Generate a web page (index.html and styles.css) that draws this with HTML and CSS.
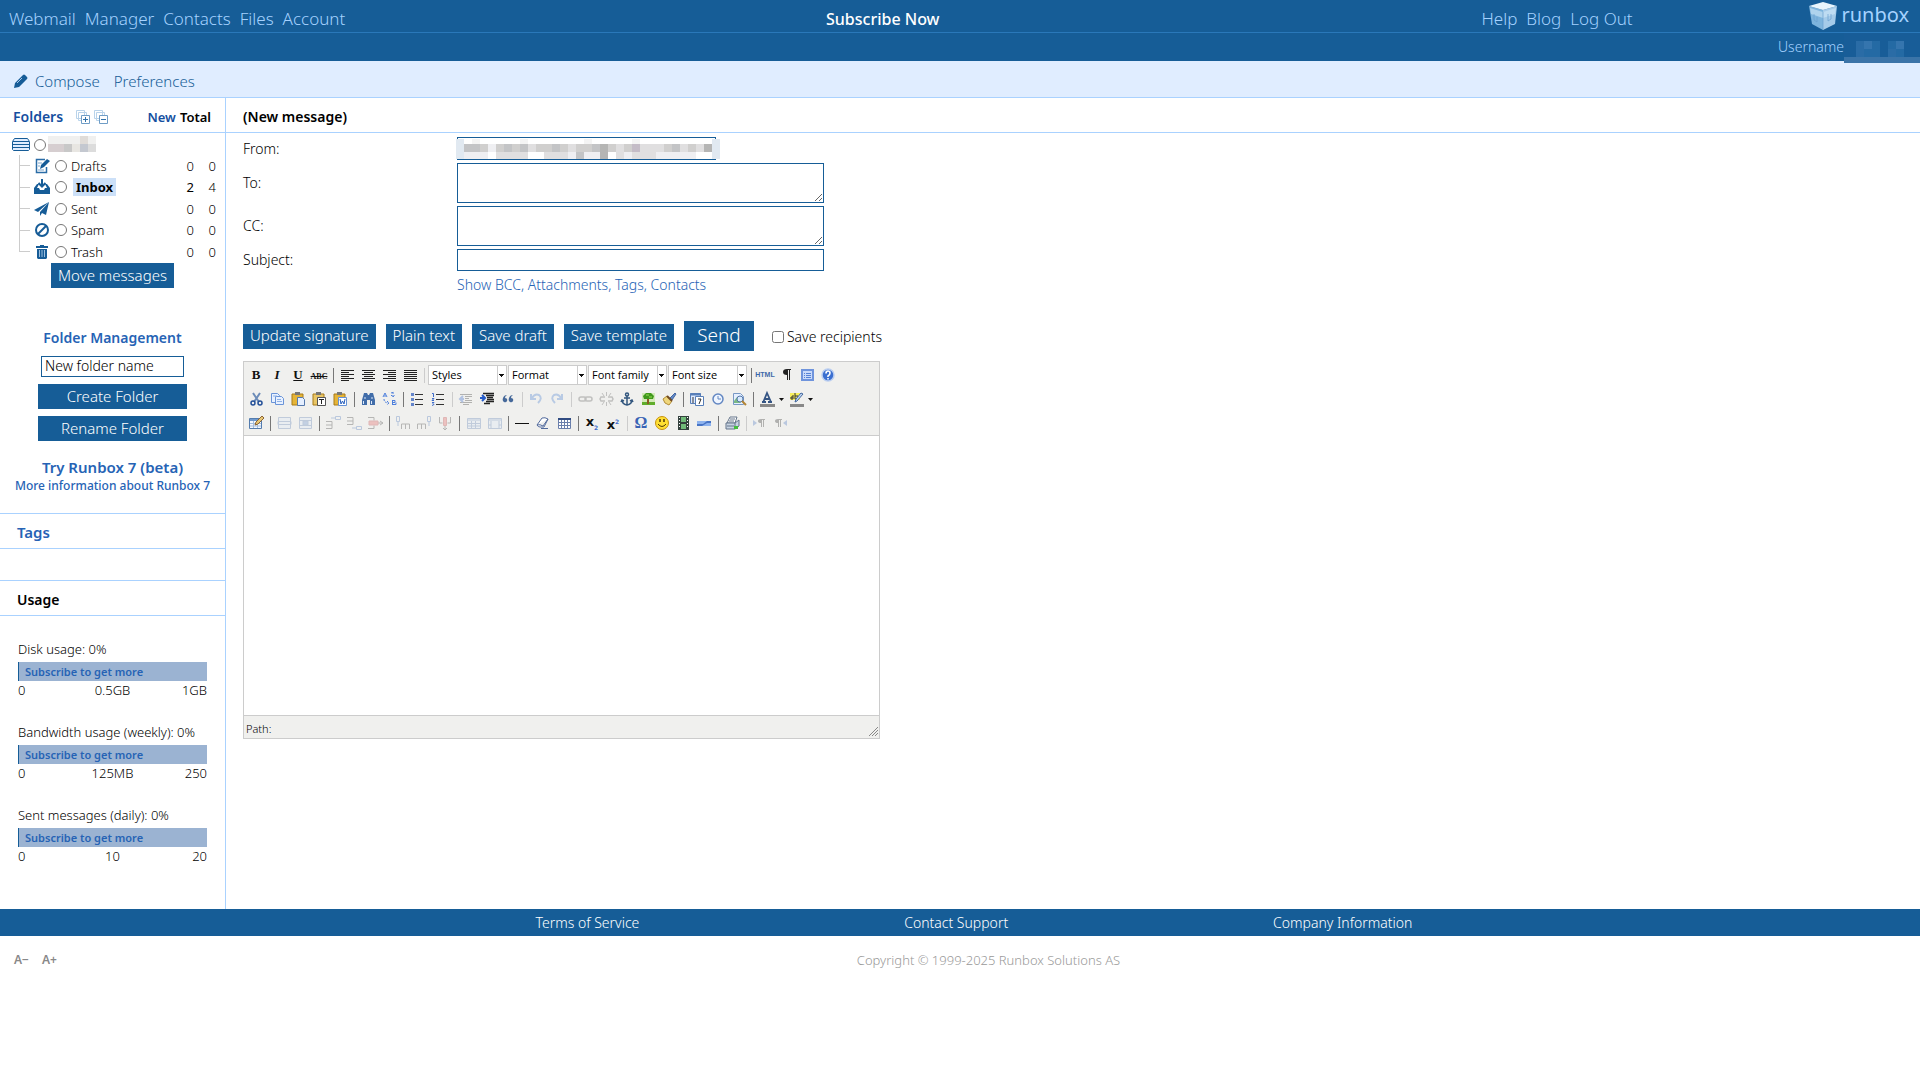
FILE: index.html
```html
<!doctype html>
<html lang="en">

<head>
    <meta charset="UTF-8" />
    <meta name="viewport" content="width=device-width, initial-scale=1.0" />
    <title>Runbox - Compose</title>
    <link rel="stylesheet" href="styles.css">
</head>

<body>
    <header class="header">
        <div class="topbar">
            <nav class="nav">
                <a href="#">Webmail</a>
                <a href="#">Manager</a>
                <a href="#">Contacts</a>
                <a href="#">Files</a>
                <a href="#">Account</a>
            </nav>
            <a class="subscribe" href="#">Subscribe Now</a>
            <nav class="nav nav-right">
                <a href="#">Help</a>
                <a href="#">Blog</a>
                <a href="#">Log Out</a>
            </nav>
            <a class="logo" href="#">
                <svg width="28" height="28" viewBox="0 0 28 28">
                    <path d="M0 4 14 8v20L3 22z" fill="#7db4dd" />
                    <path d="M28 4 14 8v20l12-6z" fill="#a5cbe9" />
                    <path d="M0 4 14 0l14 4-14 4z" fill="#e8f5fd" />
                    <path d="M1 6l13 4 13-4-1 6-12 4-12-4z" fill="#cfe8f8" opacity=".6" />
                    <path d="M5 12v6l3 2v-5M19 12v7l3-2v-5M14 10v17" fill="none" stroke="#6b9fce" opacity=".7" />
                </svg>
                <span>runbox</span>
            </a>
        </div>
        <div class="userbar">
            <span>Username</span>
            <svg class="user-name" width="76" height="30" viewBox="0 0 76 30">
                <path fill="#185d98" d="M0 0h76v30H0z" />
                <path fill="#2a6ca6" d="M12 8h8v16h-8zM44 16h8v8h-8z" />
                <path fill="#3575ae" d="M20 8h8v8h-8zM52 8h8v8h-8z" />
                <path fill="#246aa4" d="M20 16h16v8H20zM28 8h8v8h-8zM44 8h8v8h-8zM52 16h8v8h-8z" />
                <path fill="#3b74a8" d="M0 24h76v6H0z" />
            </svg>
        </div>
    </header>

    <div class="actions">
        <a href="#">
            <svg width="14" height="14" viewBox="0 0 14 14" fill="#165c97"><path d="M0 14l1-5 7-7 4 4-7 7zM9 1q1-1 2 0l2 2q1 1 0 2l-1 1-4-4z" /><path d="M3 9l5-5" stroke="#a8c9e8" /></svg>
            Compose
        </a>
        <a href="#">Preferences</a>
    </div>

    <div class="content">
        <aside class="sidebar">
            <div class="panel-head folders-head">
                <a href="#">Folders</a>
                <svg width="14" height="14" viewBox="0 0 14 14" fill="#fff" stroke="#b9d3ea"><path d="M.5.5h8v8h-8zM2.500 2.500h8v8h-8z" /><path d="M5.500 5.500h8v8h-8z" stroke="#6f9dc6" /><path d="M7 9.500h5M9.500 7v5" stroke="#3272ab" /></svg>
                <svg width="14" height="14" viewBox="0 0 14 14" fill="#fff" stroke="#b9d3ea"><path d="M.5.5h8v8h-8zM2.500 2.500h8v8h-8z" /><path d="M5.500 5.500h8v8h-8z" stroke="#6f9dc6" /><path d="M7 9.500h5" stroke="#3272ab" /></svg>
                <a class="new" href="#">New</a>
                <span class="total">Total</span>
            </div>

            <div class="folders">
                <div class="folder-root">
                    <svg width="18" height="13" viewBox="0 0 18 13" fill="#e0edff" stroke="#165c97"><path d="M2.500.5h13l2 3v8l-1 1h-15l-1-1v-8z" /><path d="M1 3.500h16M1 6.500h16M1 9.500h16" /></svg>
                    <input type="radio" name="folder" aria-label="Root folder">
                    <svg width="48" height="16" viewBox="0 0 48 16">
                        <path fill="#f0f0ef" d="M0 0h48v8H0z" />
                        <path fill="#e0dcd8" d="M32 0h8v8h-8z" />
                        <path fill="#d6ced0" d="M0 8h8v8H0zM8 8h8v8H8z" />
                        <path fill="#c8c8c8" d="M16 8h8v8h-8z" />
                        <path fill="#e8e6e2" d="M24 8h8v8h-8z" />
                        <path fill="#c4c8d0" d="M32 8h8v8h-8z" />
                        <path fill="#dcdcdc" d="M40 8h8v8h-8z" />
                    </svg>
                </div>
                <ul class="tree">
                    <li>
                        <svg width="16" height="16" viewBox="0 0 16 16"><path d="M11 1.500H2.500v13h10V9" fill="none" stroke="#2a6ca6" stroke-width="1.500" /><path d="M4 5h4M4 8h2M4 12h6" stroke="#7ba5cc" /><path d="M6 11l1-4 6-6 3 2-6 6z" fill="#165c97" /></svg>
                        <input type="radio" name="folder" id="drafts">
                        <label for="drafts">Drafts</label>
                        <span>0</span><span>0</span>
                    </li>
                    <li class="active">
                        <svg width="16" height="16" viewBox="0 0 16 16"><path d="M0 9l3-4h2L3 9h2l1 2h4l1-2h2l-2-4h2l3 4v6H0z" fill="#165c97" /><path d="M8 0v7M4.500 4 8 7.500 11.500 4" fill="none" stroke="#165c97" stroke-width="2" /></svg>
                        <input type="radio" name="folder" id="inbox">
                        <label for="inbox">Inbox</label>
                        <span>2</span><span>4</span>
                    </li>
                    <li>
                        <svg width="16" height="16" viewBox="0 0 16 16"><path d="M15 1L0 9l4 2zM15 1L6 11v4l2-3 4 2z" fill="#165c97" /></svg>
                        <input type="radio" name="folder" id="sent">
                        <label for="sent">Sent</label>
                        <span>0</span><span>0</span>
                    </li>
                    <li>
                        <svg width="16" height="16" viewBox="0 0 16 16"><circle cx="8" cy="8" r="6" fill="none" stroke="#165c97" stroke-width="2" /><path d="M4 12l8-8" stroke="#165c97" stroke-width="2" /></svg>
                        <input type="radio" name="folder" id="spam">
                        <label for="spam">Spam</label>
                        <span>0</span><span>0</span>
                    </li>
                    <li>
                        <svg width="16" height="16" viewBox="0 0 16 16"><path d="M2 2h4V1h4v1h4v2H2zM3 5h10v9l-1 1H4l-1-1z" fill="#165c97" /><path d="M5.500 6v7M8 6v7M10.500 6v7" stroke="#9dbfdf" /></svg>
                        <input type="radio" name="folder" id="trash">
                        <label for="trash">Trash</label>
                        <span>0</span><span>0</span>
                    </li>
                </ul>
                <button class="btn" type="button">Move messages</button>
            </div>

            <div class="manage">
                <a class="manage-title" href="#">Folder Management</a>
                <input type="text" value="New folder name" aria-label="New folder name">
                <button class="btn" type="button">Create Folder</button>
                <button class="btn" type="button">Rename Folder</button>
                <a class="beta" href="#">Try Runbox 7 (beta)</a>
                <a class="beta-info" href="#">More information about Runbox 7</a>
            </div>

            <div class="panel-head tags-head"><a href="#">Tags</a></div>
            <div class="tags"></div>
            <div class="panel-head">Usage</div>

            <div class="usage">
                <div class="meter">
                    <div>Disk usage: 0%</div>
                    <a href="#">Subscribe to get more</a>
                    <div class="scale"><span>0</span><span>0.5GB</span><span>1GB</span></div>
                </div>
                <div class="meter">
                    <div>Bandwidth usage (weekly): 0%</div>
                    <a href="#">Subscribe to get more</a>
                    <div class="scale"><span>0</span><span>125MB</span><span>250</span></div>
                </div>
                <div class="meter">
                    <div>Sent messages (daily): 0%</div>
                    <a href="#">Subscribe to get more</a>
                    <div class="scale"><span>0</span><span>10</span><span>20</span></div>
                </div>
            </div>
        </aside>

        <main class="main">
            <h1 class="message-head">(New message)</h1>
            <form class="compose">
                <div class="fields">
                    <label for="from">From:</label>
                    <div class="from">
                        <select id="from"></select>
                        <svg class="from-name" width="264" height="20" viewBox="0 0 264 20">
                            <path fill="#fff" d="M8 0h248v20H8z" />
                            <path fill="#e1e9f1" d="M0 0h8v20H0zM256 0h8v20h-8z" />
                            <path fill="#f4f4f4" d="M16 0h8v5h-8zM64 0h8v5h-8zM128 0h8v5h-8zM176 0h8v5h-8z" />
                            <path fill="#d0cfce" d="M24 5h8v8h-8zM40 5h8v8h-8zM56 5h8v8h-8zM80 5h8v8h-8zM88 5h8v8h-8zM104 5h8v8h-8zM120 5h16v8h-16zM152 5h8v8h-8zM168 5h8v8h-8zM208 5h8v8h-8zM232 5h8v8h-8z" />
                            <path fill="#c3c4c6" d="M8 5h16v8H8zM48 5h8v8h-8zM64 5h8v8h-8zM96 5h8v8h-8zM136 5h8v8h-8zM216 5h8v8h-8zM120 13h8v7h-8z" />
                            <path fill="#b5b5b4" d="M144 5h8v15h-8zM248 5h8v8h-8z" />
                            <path fill="#c4bcc7" d="M176 5h8v8h-8z" />
                            <path fill="#e0dfe0" d="M72 5h8v8h-8zM112 5h8v8h-8zM160 5h8v8h-8zM184 5h24v8h-24zM224 5h8v8h-8zM240 5h8v8h-8zM40 13h32v7H40zM88 13h24v7H88zM160 13h8v7h-8zM176 13h24v7h-24z" />
                            <path fill="#efeff2" d="M32 5h8v8h-8zM8 13h24v7H8zM112 13h8v7h-8zM128 13h16v7h-16zM168 13h8v7h-8zM200 13h40v7h-40z" />
                        </svg>
                    </div>
                    <label for="to">To:</label>
                    <textarea id="to"></textarea>
                    <label for="cc">CC:</label>
                    <textarea id="cc"></textarea>
                    <label for="subject">Subject:</label>
                    <input id="subject" type="text">
                    <a class="more" href="#">Show BCC, Attachments, Tags, Contacts</a>
                </div>

                <div class="buttons">
                    <button class="btn" type="button">Update signature</button>
                    <button class="btn" type="button">Plain text</button>
                    <button class="btn" type="button">Save draft</button>
                    <button class="btn" type="button">Save template</button>
                    <button class="btn send" type="button">Send</button>
                    <label class="save-recipients"><input type="checkbox">Save recipients</label>
                </div>

                <div class="editor">
                    <div class="toolbar">
                        <div class="tools">
                            <button type="button" aria-label="Bold"><b>B</b></button>
                            <button type="button" aria-label="Italic"><i>I</i></button>
                            <button type="button" aria-label="Underline"><u>U</u></button>
                            <button type="button" aria-label="Strikethrough"><s>ABC</s></button>
                            <hr>
                            <button type="button" aria-label="Align left"><svg viewBox="0 0 20 20" stroke="#222"><path d="M4 5.500h13M4 7.500h8M4 9.500h13M4 11.500h8M4 13.500h13M4 15.500h8" /></svg></button>
                            <button type="button" aria-label="Align center"><svg viewBox="0 0 20 20" stroke="#222"><path d="M4 5.500h13M6 7.500h9M4 9.500h13M6 11.500h9M4 13.500h13M6 15.500h9" /></svg></button>
                            <button type="button" aria-label="Align right"><svg viewBox="0 0 20 20" stroke="#222"><path d="M4 5.500h13M9 7.500h8M4 9.500h13M9 11.500h8M4 13.500h13M9 15.500h8" /></svg></button>
                            <button type="button" aria-label="Justify"><svg viewBox="0 0 20 20" stroke="#222"><path d="M4 5.500h13M4 7.500h13M4 9.500h13M4 11.500h13M4 13.500h13M4 15.500h13" /></svg></button>
                            <hr class="light">
                            <select aria-label="Styles"><option>Styles</option></select>
                            <select aria-label="Format"><option>Format</option></select>
                            <select aria-label="Font family"><option>Font family</option></select>
                            <select aria-label="Font size"><option>Font size</option></select>
                            <hr>
                            <button class="html" type="button">HTML</button>
                            <button type="button" aria-label="Show invisibles"><svg viewBox="0 0 20 20"><path d="M15 4v1h-1v10h-1V5h-1v10h-1v-5q-4 0-4-3t4-3z" fill="#222" /></svg></button>
                            <button type="button" aria-label="Fullscreen"><svg viewBox="0 0 20 20"><path d="M4 4h13v12H4z" fill="#6f94dc" /><path d="M6 6h9v8H6z" fill="#c9dafa" /><path d="M7 8.500h1m1 0h5M7 10.500h1m1 0h5M7 12.500h1m1 0h5" stroke="#5582d6" /></svg></button>
                            <button type="button" aria-label="Help"><svg viewBox="0 0 20 20"><circle cx="10" cy="10" r="6" fill="#3b6fd0" stroke="#b9cdf0" stroke-width="1.500" /><path d="M8 8.500Q8 6 10 6t2 2-2 3v1" fill="none" stroke="#fff" stroke-width="1.600" /><path d="M9.200 13h1.600v1.500H9.200z" fill="#fff" /></svg></button>
                        </div>
                        <div class="tools">
                            <button type="button" aria-label="Cut"><svg viewBox="0 0 20 20" fill="none"><path d="M7 4l6 9M14 4l-6 9" stroke="#6c8cb8" stroke-width="2" /><circle cx="7" cy="14" r="2" stroke="#234f98" stroke-width="1.500" /><circle cx="14" cy="14" r="2" stroke="#234f98" stroke-width="1.500" /></svg></button>
                            <button type="button" aria-label="Copy"><svg viewBox="0 0 20 20" fill="#e8f1ff" stroke="#6a94d8"><path d="M4.500 4.500h6l2 2v7h-8z" /><path d="M8.500 7.500h6l2 2v6h-8z" /><path d="M6 7h4M10 10.500h4M10 12.500h5" stroke="#8fb1e5" /></svg></button>
                            <button type="button" aria-label="Paste"><svg viewBox="0 0 20 20"><path d="M4 5h11v11H4z" fill="#e5b437" stroke="#a77b19" /><path d="M7 3h5v3H7z" fill="#777" /><path d="M9.500 8.500h5l2 2v6h-7z" fill="#e5efff" stroke="#5579ad" /></svg></button>
                            <button type="button" aria-label="Paste as text"><svg viewBox="0 0 20 20"><path d="M4 5h11v11H4z" fill="#e9c666" stroke="#a77b19" /><path d="M7 3h5v3H7z" fill="#777" /><path d="M8.500 8.500h8v8h-8z" fill="#fff" stroke="#555" /><path d="M10 10.500h5M12.500 10v5" stroke="#222" /></svg></button>
                            <button type="button" aria-label="Paste from Word"><svg viewBox="0 0 20 20"><path d="M4 5h11v11H4z" fill="#e5b437" stroke="#a77b19" /><path d="M7 3h5v3H7z" fill="#777" /><path d="M8.500 8.500h8v8h-8z" fill="#fff" stroke="#6792d5" /><path d="M10 10l1 5 1.500-3L14 15l1-5" fill="none" stroke="#275fbd" /></svg></button>
                            <hr>
                            <button type="button" aria-label="Find"><svg viewBox="0 0 20 20" fill="#416da9"><path d="M6 4h3l1 2h1l1-2h3l2 7v5h-5v-5H9v5H4v-5z" /><path d="M6 9h2M13 9h2M5.500 12v3M13.500 12v3" stroke="#dce9fa" /></svg></button>
                            <button type="button" aria-label="Replace"><svg viewBox="0 0 20 20" fill="none" stroke="#4c7edc"><path d="M4 8l2-4 2 4M5 7h2" /><path d="M13.500 11v5M13 11.500h3v2h-2M14 15.500h3v-2" /><path d="M5 10q0 4 5 4M8 12l2 2-2 2M12 4l3-1M14 3v5M12 6l2 2 2-2" stroke-dasharray="2 1" /></svg></button>
                            <hr>
                            <button type="button" aria-label="Bullet list"><svg viewBox="0 0 20 20"><path d="M4 4h3v3H4zM4 9h3v3H4zM4 14h3v3H4z" fill="#6384ca" /><path d="M8 5.500h8M8 10.500h8M8 15.500h8" stroke="#333" /></svg></button>
                            <button type="button" aria-label="Numbered list"><svg viewBox="0 0 20 20"><path d="M4 4.500h1.500V8M4 9.500h2l-2 2h2M4 13.500h2l-1 1 1 1-2 1" fill="none" stroke="#3d6bcb" /><path d="M8 5.500h8M8 10.500h8M8 15.500h8" stroke="#333" /></svg></button>
                            <hr class="light">
                            <button class="off" type="button" aria-label="Outdent"><svg viewBox="0 0 20 20"><path d="M4 5.500h12M9 7.500h7M9 9.500h4M9 11.500h7M4 13.500h12M7 15.500h6" stroke="#222" /><path d="M8 10H5m2-3-3 3 3 3" fill="none" stroke="#245bc9" stroke-width="2" /></svg></button>
                            <button type="button" aria-label="Indent"><svg viewBox="0 0 20 20"><path d="M6 4.500h11M9 6.500h8M10 8.500h6M10 10.500h7M9 12.500h8M7 14.500h6" stroke="#222" stroke-width="1.300" /><path d="M3 9h4M5 6l3 3-3 3" fill="none" stroke="#245bc9" stroke-width="2" /></svg></button>
                            <button type="button" aria-label="Blockquote"><svg viewBox="0 0 20 20" fill="#46699a"><path d="M9 6Q7 7 7 9q3 0 2 3-1 2-3 1-2-1-1-4 1-3 4-3zM15 6q-2 1-2 3 3 0 2 3-1 2-3 1-2-1-1-4 1-3 4-3z" /></svg></button>
                            <hr class="light">
                            <button class="off" type="button" aria-label="Undo"><svg viewBox="0 0 20 20"><path d="M5 5v5h5M6 9q3-5 7-3 4 3-1 8" fill="none" stroke="#3975cf" stroke-width="2" /></svg></button>
                            <button class="off" type="button" aria-label="Redo"><svg viewBox="0 0 20 20"><path d="M15 5v5h-5M14 9q-3-5-7-3-4 3 1 8" fill="none" stroke="#3975cf" stroke-width="2" /></svg></button>
                            <hr class="light">
                            <button class="off" type="button" aria-label="Link"><svg viewBox="0 0 20 20" fill="none" stroke="#555" stroke-width="1.500"><rect x="4" y="8" width="7" height="4" rx="2" /><rect x="10" y="8" width="7" height="4" rx="2" /></svg></button>
                            <button class="off" type="button" aria-label="Unlink"><svg viewBox="0 0 20 20" fill="none" stroke="#555"><path d="M9 8H5L4 10l1 2h4M12 8h4l1 2-1 2h-4" stroke-width="1.500" /><path d="M10.500 3v4M6 4l2 3M15 4l-2 3M10.500 13v4M6 16l2-3M15 16l-2-3" /></svg></button>
                            <button type="button" aria-label="Anchor"><svg viewBox="0 0 20 20" fill="none" stroke="#33577f" stroke-width="1.500"><circle cx="10" cy="5.500" r="1.500" /><path d="M10 7v9M7 9h6M5 11q0 4 5 5 5-1 5-5M4 13l1-2 2 1M16 13l-1-2-2 1" /></svg></button>
                            <button type="button" aria-label="Image"><svg viewBox="0 0 20 20"><path d="M4 4h13v12H4z" fill="#d3e9b8" /><path d="M4 13h13v3H4z" fill="#60ad2c" /><path d="M9 9h2v6H9z" fill="#8b5a24" /><path d="M5 7l3-3h5l3 3-1 3H6z" fill="#3f981b" /><path d="M8 6h3M11 8h3" stroke="#9bdc54" /></svg></button>
                            <button type="button" aria-label="Cleanup"><svg viewBox="0 0 20 20"><path d="M11 9l5-5 1 1-4 6z" fill="#6289c6" stroke="#4468a4" /><path d="M4 10l4-3 5 5-3 4-4-2z" fill="#efd67b" stroke="#b28c37" /><path d="M8 7l5 5" stroke="#704a22" stroke-width="2" /></svg></button>
                            <hr>
                            <button type="button" aria-label="Insert date"><svg viewBox="0 0 20 20" stroke="#587fb8"><path d="M3.500 4.500h10v10h-10z" fill="#dce9ff" /><path d="M3 5.500h11" stroke-width="2" /><path d="M8.500 7.500h8v9h-8z" fill="#fff" /><path d="M11 10h3l-2 5M5 9h2M5 11h2M5 13h2" fill="none" stroke="#333" /></svg></button>
                            <button type="button" aria-label="Insert time"><svg viewBox="0 0 20 20" fill="#eef5ff" stroke="#6387c2"><circle cx="10" cy="10" r="5" stroke-width="1.500" /><path d="M10 7v3h3" fill="none" /></svg></button>
                            <button type="button" aria-label="Preview"><svg viewBox="0 0 20 20"><path d="M4.500 4.500h7l3 3v8h-10z" fill="#e5efff" stroke="#7898c4" /><path d="M5 12l3-4 4 6H5z" fill="#7bb985" /><circle cx="11" cy="10" r="3" fill="#d7eaff" stroke="#5476a8" /><path d="M13 12l4 4" stroke="#b38535" stroke-width="2" /></svg></button>
                            <hr>
                            <button class="color" type="button" aria-label="Text color"><svg viewBox="0 0 29 20"><path d="M5 13h4M11 13h4M6.500 12.500 10 4l4 9M8 10h5" fill="none" stroke="#355584" stroke-width="1.800" /><path d="M3 15h15v3H3z" fill="#888" /><path d="M22 9h5l-2.500 3z" fill="#111" /></svg></button>
                            <button class="color" type="button" aria-label="Background color"><svg viewBox="0 0 29 20"><path d="M3 4h10v7H3z" fill="#f8f05c" /><path d="M6 6v4H4V8h2M8 4v6h3V7H8" fill="none" stroke="#333" /><path d="M16 5l-6 7-2 1 1-3 5-6z" fill="#c3d7f5" stroke="#42679d" /><path d="M3 15h14v3H3z" fill="#888" /><path d="M21 9h5l-2.500 3z" fill="#111" /></svg></button>
                        </div>
                        <div class="tools">
                            <button type="button" aria-label="Table"><svg viewBox="0 0 20 20"><path d="M3.500 5.500h12v10h-12z" fill="#f3f8ff" stroke="#547cae" /><path d="M4 6h11v2H4z" fill="#7099cd" /><path d="M4 10.500h11M4 13h11M7.500 8v7M11.500 8v7" stroke="#a5bedd" /><path d="M9 12l1-3 6-6 2 2-6 6z" fill="#e6c775" stroke="#8b6436" /></svg></button>
                            <hr>
                            <button class="off" type="button" aria-label="Row properties"><svg viewBox="0 0 20 20" fill="#dbe8fb" stroke="#5379b1"><path d="M4.500 4.500h12v11h-12zM4 8.500h13v3H4z" /></svg></button>
                            <button class="off" type="button" aria-label="Cell properties"><svg viewBox="0 0 20 20" fill="#dbe8fb" stroke="#5379b1"><path d="M4.500 4.500h12v11h-12zM4 7.500h13M4 12.500h13" /><path d="M8 8h5v4H8z" fill="#5e89cb" /></svg></button>
                            <hr>
                            <button class="off" type="button" aria-label="Insert row before"><svg viewBox="0 0 20 20" fill="none" stroke="#333"><path d="M3 8.500h6v7H3M3 12h6" /><path d="M12.500 3.500h5v3h-5zM12 5H8" stroke="#426fb7" /></svg></button>
                            <button class="off" type="button" aria-label="Insert row after"><svg viewBox="0 0 20 20" fill="none" stroke="#333"><path d="M3 4.500h6v7H3M3 8h6" /><path d="M12.500 13.500h5v3h-5zM12 15H8" stroke="#426fb7" /></svg></button>
                            <button class="off" type="button" aria-label="Delete row"><svg viewBox="0 0 20 20" fill="none" stroke="#333"><path d="M3 4.500h6v3M3 15.500h6v-3M13 10h5M15 8l3 2-3 2" /><path d="M4 8h9v4H4z" fill="#e55757" stroke="#ba3838" /></svg></button>
                            <hr>
                            <button class="off" type="button" aria-label="Insert column before"><svg viewBox="0 0 20 20" fill="none" stroke="#333"><path d="M8.500 16v-5h8v5M12.500 11v5" /><path d="M3.500 3.500h3v5h-3zM5 9v4" stroke="#426fb7" /></svg></button>
                            <button class="off" type="button" aria-label="Insert column after"><svg viewBox="0 0 20 20" fill="none" stroke="#333"><path d="M3.500 16v-5h8v5M7.500 11v5" /><path d="M13.500 3.500h3v5h-3zM15 9v4" stroke="#426fb7" /></svg></button>
                            <button class="off" type="button" aria-label="Delete column"><svg viewBox="0 0 20 20" fill="none" stroke="#333"><path d="M4.500 4v6h3M15.500 4v6h-3M10 13v4M8 15l2 2 2-2" /><path d="M8.500 4.500h3v8h-3z" fill="#e55757" stroke="#ba3838" /></svg></button>
                            <hr>
                            <button class="off" type="button" aria-label="Split cells"><svg viewBox="0 0 20 20" fill="#dbe8fb" stroke="#5379b1"><path d="M4.500 5.500h13v10h-13zM4 7h13" /><path d="M4 10.500h13M4 13h13M8.500 8v7M12.500 8v7" /></svg></button>
                            <button class="off" type="button" aria-label="Merge cells"><svg viewBox="0 0 20 20" fill="#dbe8fb" stroke="#5379b1"><path d="M4.500 5.500h13v10h-13zM4 7h13" /><path d="M7 8v7M15 8v7M4 12h3M15 12h3" /></svg></button>
                            <hr>
                            <button type="button" aria-label="Horizontal rule"><svg viewBox="0 0 20 20"><path d="M3 10.500h14" stroke="#111" /></svg></button>
                            <button type="button" aria-label="Remove formatting"><svg viewBox="0 0 20 20" fill="#fff" stroke="#536b9d"><path d="M4 12l5-7q3-1 6 1l-4 8H7q-2 0-3-2zM4 12q3-1 6 1l5-7M8 15.500h7" /></svg></button>
                            <button type="button" aria-label="Toggle guidelines"><svg viewBox="0 0 20 20" fill="#fff" stroke="#6a7fac"><path d="M4.500 5.500h12v10h-12z" /><path d="M4 6h13" stroke="#314c82" stroke-width="2" /><path d="M4 9.500h13M4 12.500h13M7.500 7v9M10.500 7v9M13.500 7v9" /></svg></button>
                            <hr>
                            <button class="script" type="button" aria-label="Subscript">x<sub>2</sub></button>
                            <button class="script" type="button" aria-label="Superscript">x<sup>2</sup></button>
                            <hr class="light">
                            <button class="omega" type="button" aria-label="Special character">Ω</button>
                            <button type="button" aria-label="Emoticon"><svg viewBox="0 0 20 20"><circle cx="10" cy="10" r="6.500" fill="#ffdf32" stroke="#c79210" /><path d="M8 6v3M12 6v3" stroke="#533b08" stroke-width="1.500" /><path d="M6 11q4 5 8 0" fill="none" stroke="#533b08" /></svg></button>
                            <button type="button" aria-label="Media"><svg viewBox="0 0 20 20"><path d="M5 3h11v14H5z" fill="#34413d" /><path d="M8 4h5v5H8zM8 11h5v5H8z" fill="#71bb79" /><path d="M6.500 4v12M14.500 4v12" stroke="#fff" stroke-dasharray="1 2" /></svg></button>
                            <button type="button" aria-label="Advanced rule"><svg viewBox="0 0 20 20"><path d="M3 8h14v5H3z" fill="#8eb3ee" /><path d="M3 13h5l5-3h4V8h-4l-4 3H3z" fill="#4774c5" /></svg></button>
                            <hr>
                            <button type="button" aria-label="Print"><svg viewBox="0 0 20 20" stroke="#65758a"><path d="M8 4h7l-2 6H5z" fill="#fff" /><path d="M4 10h9l4-3v6l-4 3H4z" fill="#c8d4e3" /><path d="M5 13h7M13 10v6M8 6h5M7 8h5" /><path d="M12 13h4v3h-4z" fill="#42bd3b" stroke="none" /></svg></button>
                            <hr class="light">
                            <button class="off" type="button" aria-label="Left to right"><svg viewBox="0 0 20 20"><path d="M3 7l4 3-4 3z" fill="#416fc0" /><path d="M15 6v1h-1v7h-1V7h-1v7h-1v-4q-3 0-3-2t3-2z" fill="#222" /></svg></button>
                            <button class="off" type="button" aria-label="Right to left"><svg viewBox="0 0 20 20"><path d="M16 7l-4 3 4 3z" fill="#416fc0" /><path d="M11 6v1h-1v7H9V7H8v7H7v-4q-3 0-3-2t3-2z" fill="#222" /></svg></button>
                        </div>
                    </div>
                    <textarea class="body" aria-label="Message"></textarea>
                    <div class="status">
                        <span>Path:</span>
                        <svg width="11" height="11" viewBox="0 0 11 11" stroke="#888"><path d="M1 10l9-9M4 10l6-6M7 10l3-3" /></svg>
                    </div>
                </div>
            </form>
        </main>
    </div>

    <footer>
        <nav class="footer-links">
            <a href="#">Terms of Service</a>
            <a href="#">Contact Support</a>
            <a href="#">Company Information</a>
        </nav>
        <div class="footer-bottom">
            <div class="text-size"><button type="button">A−</button><button type="button">A+</button></div>
            <p>Copyright © 1999-2025 Runbox Solutions AS</p>
        </div>
    </footer>
</body>

</html>
```
FILE: styles.css
```css
* {
    box-sizing: border-box;
}

body {
    margin: 0;
    background: #fff;
    color: #000;
    font-family: "Noto Sans", "Open Sans", sans-serif;
    font-size: 14px;
    font-weight: 300;
    line-height: 20px;
}

a {
    color: #2663b5;
    text-decoration: none;
}

button,
input,
select,
textarea {
    font: inherit;
    margin: 0;
}

svg {
    display: block;
    flex: none;
}

/* Header */
.header {
    background: #165d97;
}

.header a {
    color: #a5d2ff;
}

.topbar {
    display: grid;
    grid-template-columns: 43% 1fr 12% 10.5%;
    align-items: center;
    height: 33px;
    padding: 0 11px 0 9px;
    border-bottom: 1px solid #2a78b9;
    font-size: 16px;
}

.nav {
    display: flex;
    gap: 9px;
    padding-top: 6px;
    font-size: 17px;
}

.header .subscribe {
    padding-top: 6px;
    color: #fff;
    font-weight: 500;
}

.logo {
    display: flex;
    justify-content: flex-end;
    gap: 4px;
    font-size: 20px;
    font-weight: 400;
}

.logo span {
    line-height: 25px;
}

.userbar {
    display: flex;
    justify-content: flex-end;
    align-items: center;
    height: 28px;
    color: #a5d2ff;
}

.user-name {
    margin-bottom: -2px;
}

.actions {
    display: flex;
    align-items: center;
    gap: 14px;
    height: 37px;
    padding: 4px 0 0 14px;
    background: #e0edff;
    border-bottom: 1px solid #aad2ff;
    font-size: 15px;
}

.actions a {
    display: flex;
    align-items: center;
    gap: 7px;
    color: #165d97;
}

.btn {
    height: 25px;
    padding: 0 6px 2px;
    border: 1px solid #165d97;
    background: #165d97;
    color: #fff;
    font-size: 15px;
    line-height: 20px;
}

/* Sidebar */
.content {
    display: flex;
}

.sidebar {
    width: 226px;
    flex: none;
    border-right: 1px solid #aad2ff;
}

.panel-head {
    display: flex;
    align-items: center;
    height: 35px;
    padding: 3px 14px 0 17px;
    border-bottom: 1px solid #aad2ff;
    font-weight: 600;
}

.folders-head {
    gap: 4px;
    padding-left: 13px;
    font-size: 13px;
}

.folders-head a {
    color: #154fa0;
}

.folders-head a:first-child {
    margin-right: 9px;
    font-size: 14px;
}

.folders-head .new {
    margin-left: auto;
}

.folders {
    display: flex;
    flex-direction: column;
    align-items: center;
    height: 180px;
    font-size: 13px;
}

.folder-root {
    display: flex;
    align-self: stretch;
    align-items: center;
    height: 22px;
    padding: 0 0 0 12px;
}

input[type="radio"] {
    flex: none;
    width: 12px;
    height: 12px;
    margin: 0 4px;
}

.folder-root input {
    margin: 2px 2px 0 4px;
}

.tree {
    align-self: stretch;
    margin: 0 0 0 19px;
    padding: 0;
    list-style: none;
}

.tree li {
    display: flex;
    align-items: center;
    height: 22px;
    padding-right: 9px;
    border-left: 1px solid #ccc;
}

.tree li:nth-child(odd) {
    height: 21px;
}

.tree li::before {
    content: "";
    width: 10px;
    margin-right: 4px;
    border-top: 1px solid #ccc;
}

.tree li:last-child {
    border-left: 0;
    padding-left: 1px;
    background: linear-gradient(#ccc, #ccc) no-repeat 0 0 / 1px 11px;
}

.tree input[type="radio"] {
    margin-left: 5px;
}

.tree label {
    margin-right: auto;
}

.tree .active label {
    padding: 0 3px;
    margin-left: 2px;
    line-height: 18px;
    background: #cce0f8;
    font-weight: 700;
}

.tree .active label + span {
    font-weight: 400;
}

.tree span {
    width: 22px;
    text-align: right;
}

.folders .btn {
    margin-top: 1px;
}

.manage {
    display: flex;
    flex-direction: column;
    align-items: center;
    height: 200px;
    padding: 15px 0 0;
    font-weight: 600;
}

.manage input {
    width: 143px;
    height: 21px;
    margin: 8px 0 7px;
    padding: 0 3px 2px;
    border: 1px solid #165d97;
    font-weight: 300;
}

.manage .btn {
    width: 149px;
    margin-bottom: 7px;
    font-weight: 300;
}

.beta {
    margin-top: 9px;
    font-size: 15px;
}

.beta-info {
    font-size: 12px;
    font-weight: 500;
    line-height: 18px;
}

.tags-head {
    height: 36px;
    padding-top: 1px;
    border-top: 1px solid #aad2ff;
    font-size: 15px;
}

.tags {
    height: 32px;
    border-bottom: 1px solid #aad2ff;
}

.usage {
    display: flex;
    flex-direction: column;
    gap: 23px;
    padding: 23px 18px 44px;
    font-size: 13px;
}

.meter a {
    display: block;
    height: 19px;
    margin-top: 3px;
    padding-left: 6px;
    border-left: 1px solid #165d97;
    background: #9bb3d2;
    font-size: 11px;
    font-weight: 600;
    line-height: 19px;
}

.scale {
    display: grid;
    grid-template-columns: 1fr 1fr 1fr;
    font-size: 13px;
    line-height: 18px;
}

.scale span:nth-child(2) {
    text-align: center;
}

.scale span:last-child {
    text-align: right;
}

/* Message form */
.main {
    flex: 1;
}

.message-head {
    height: 35px;
    margin: 0;
    padding: 3px 17px 0;
    border-bottom: 1px solid #aad2ff;
    font-size: 14px;
    font-weight: 600;
    line-height: 32px;
}

.compose {
    padding: 4px 17px;
}

.fields {
    display: grid;
    grid-template-columns: 214px 367px;
    row-gap: 3px;
    align-items: center;
}

.fields select,
.fields textarea,
.fields input {
    display: block;
    width: 100%;
    height: 22px;
    border: 1px solid #165d97;
    background: #fff;
}

.fields textarea {
    height: 40px;
}

.from {
    position: relative;
    width: 259px;
}

.from select {
    height: 23px;
    appearance: none;
}

.from-name {
    position: absolute;
    top: 2px;
    left: -1px;
}

.fields .more {
    grid-column: 2;
    margin-top: 1px;
}

.buttons {
    display: flex;
    align-items: center;
    gap: 10px;
    margin: 26px 0 10px;
}

.buttons .send {
    width: 70px;
    height: 30px;
    font-size: 19px;
}

.save-recipients {
    display: flex;
    align-items: center;
    gap: 3px;
    margin-left: 8px;
    padding-top: 2px;
}

.save-recipients input {
    width: 12px;
    height: 12px;
}

/* Editor */
.editor {
    width: 637px;
    border: 1px solid #ccc;
    font-size: 11px;
}

.toolbar {
    padding: 1px 3px 0 2px;
    background: #f0f0ee;
    border-bottom: 1px solid #ccc;
}

.tools {
    display: flex;
    align-items: center;
    gap: 1px;
    height: 24px;
}

.tools button {
    width: 20px;
    height: 20px;
    padding: 0;
    border: 0;
    background: none;
    color: #111;
    font: 700 13px/20px "Liberation Serif", serif;
    text-align: center;
}

.tools svg {
    width: 100%;
    height: 20px;
}

.tools s {
    font-size: 8px;
}

.tools .html {
    color: #3e68a8;
    font: 700 7px/20px "Liberation Sans", sans-serif;
}

.tools .script {
    font: 700 13px/18px "DejaVu Sans", sans-serif;
}

.script sub,
.script sup {
    color: #3d6bcb;
    font-size: 6px;
}

.tools .omega {
    color: #3963b5;
    font-size: 16px;
}

.tools .color {
    width: 29px;
}

.tools .off {
    opacity: .3;
}

.tools hr {
    width: 1px;
    height: 15px;
    margin: 0 2px 0 3px;
    border: 0;
    background: #777;
}

.tools hr.light {
    background: #ccc;
}

.tools select {
    width: 79px;
    height: 20px;
    padding: 0 3px;
    appearance: none;
    border: 1px solid #ccc;
    border-radius: 0;
    background: linear-gradient(#ccc, #ccc) no-repeat right 8px top / 1px 100%, conic-gradient(from -45deg at 50% 100%, #111 90deg, transparent 0) no-repeat right 2px center / 5px 3px, #fff;
    font: 400 11px/18px "Open Sans", sans-serif;
}

.body {
    display: block;
    width: 100%;
    height: 279px;
    border: 0;
    resize: none;
}

.status {
    display: flex;
    justify-content: space-between;
    align-items: flex-end;
    height: 23px;
    padding: 0 0 1px 2px;
    border-top: 1px solid #ccc;
    background: #f0f0ee;
}

.status span {
    line-height: 16px;
}

/* Footer */
.footer-links {
    display: flex;
    justify-content: center;
    gap: 14%;
    padding: 4px 0 3px 28px;
    background: #165d97;
}

.footer-links a {
    color: #fff;
}

.footer-bottom {
    display: flex;
    align-items: center;
    padding: 14px 0 14px 14px;
    color: #999;
    font-size: 13px;
}

.footer-bottom p {
    flex: 1;
    margin: 0;
    text-align: center;
}

.text-size {
    display: flex;
    gap: 13px;
}

.text-size button {
    padding: 0;
    border: 0;
    background: none;
    color: #888;
    font-size: 12px;
    font-weight: 600;
}
```
